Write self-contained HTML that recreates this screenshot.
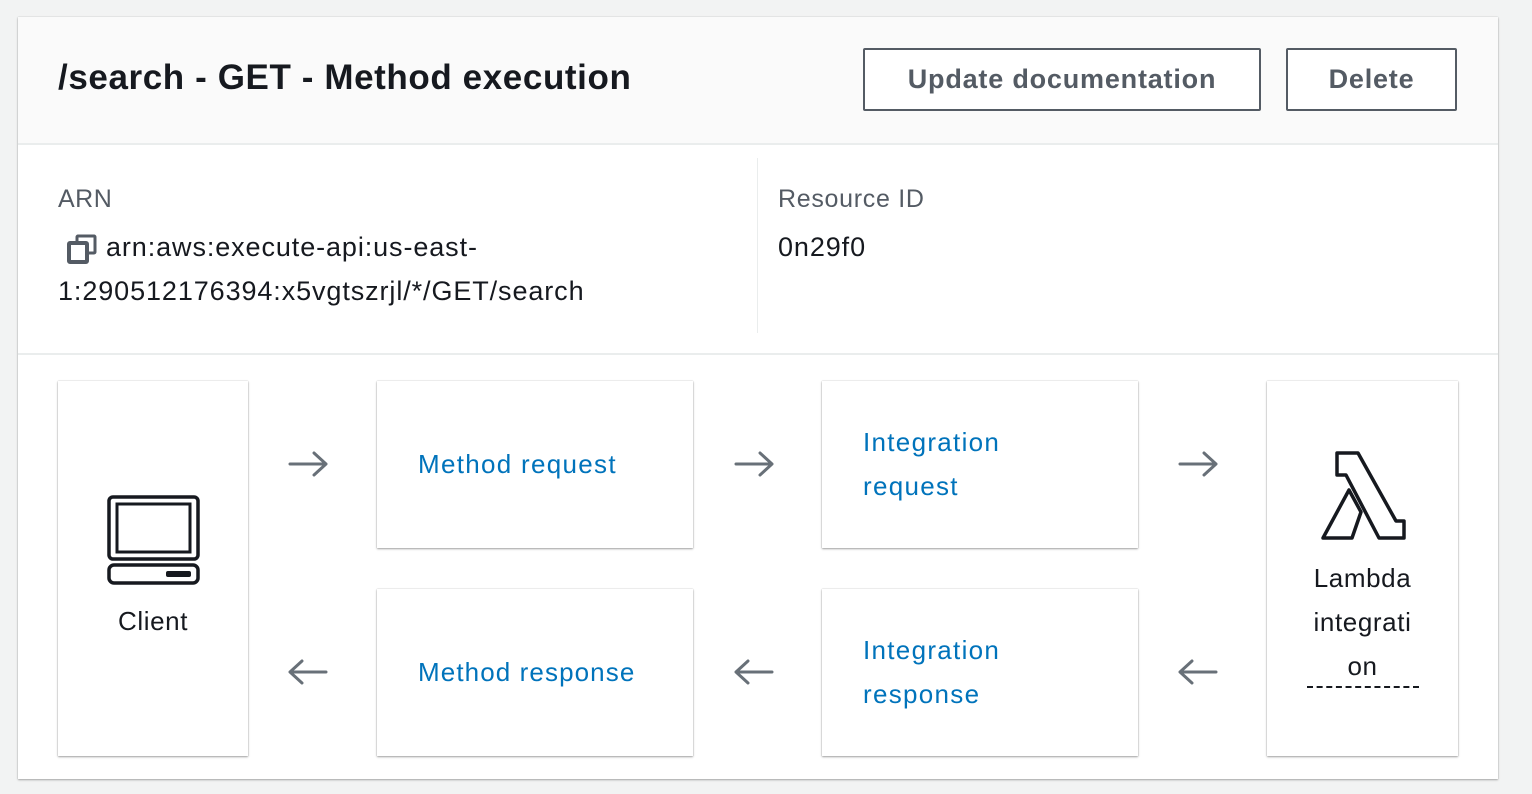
<!DOCTYPE html>
<html><head><style>
*{margin:0;padding:0;box-sizing:border-box}
body{width:1532px;height:794px;background:#f2f3f3;font-family:"Liberation Sans",sans-serif;position:relative;overflow:hidden;color:#16191f}
.a{position:absolute}
.card{left:18px;top:17px;width:1480px;height:762px;background:#fff;box-shadow:0 1px 2px rgba(0,0,0,.3),0 0 1px rgba(0,0,0,.2)}
.hdr{left:18px;top:17px;width:1480px;height:128px;background:#fafafa;border-bottom:2px solid #eaeded}
.btn{border:2px solid #545b64;border-radius:2px;background:#fff;color:#545b64;font-weight:bold;font-size:27px;letter-spacing:0.8px;display:flex;align-items:center;justify-content:center}
.box{background:#fff;box-shadow:0 1px 2px rgba(0,0,0,.35),0 0 1px rgba(0,0,0,.25)}
.lnk{color:#0073bb;font-size:26px;line-height:44px;letter-spacing:1.3px}
</style></head><body>
<div class="a card"></div>
<div class="a hdr"></div>
<div class="a" style="left:58px;top:58px;font-size:35px;font-weight:bold;letter-spacing:0.6px">/search - GET - Method execution</div>
<div class="a btn" style="left:863px;top:48px;width:398px;height:63px">Update documentation</div>
<div class="a btn" style="left:1286px;top:48px;width:171px;height:63px">Delete</div>
<div class="a" style="left:18px;top:353px;width:1480px;height:2px;background:#eaeded"></div>
<div class="a" style="left:757px;top:158px;width:1px;height:175px;background:#eaeded"></div>
<div class="a" style="left:58px;top:185px;font-size:25px;color:#545b64;letter-spacing:0.5px">ARN</div>
<svg class="a" style="left:67px;top:234px" width="32" height="30" viewBox="0 0 32 30"><rect x="10" y="2" width="18" height="17" rx="1" fill="none" stroke="#545b64" stroke-width="3"/><rect x="2" y="9" width="18" height="19" rx="1" fill="#fff" stroke="#545b64" stroke-width="4"/></svg>
<div class="a" style="left:106px;top:232px;font-size:27px;letter-spacing:0.9px">arn:aws:execute-api:us-east-</div>
<div class="a" style="left:58px;top:276px;font-size:27px;letter-spacing:0.9px">1:290512176394:x5vgtszrjl/*/GET/search</div>
<div class="a" style="left:778px;top:185px;font-size:25px;color:#545b64;letter-spacing:0.7px">Resource ID</div>
<div class="a" style="left:778px;top:232px;font-size:27px;letter-spacing:0.9px">0n29f0</div>

<div class="a box" style="left:58px;top:381px;width:190px;height:375px"></div>
<svg class="a" style="left:107px;top:495px" width="94" height="90" viewBox="0 0 94 90"><rect x="2" y="2" width="89" height="62" rx="4" fill="none" stroke="#16191f" stroke-width="3.5"/><rect x="10" y="9" width="73" height="48" fill="none" stroke="#16191f" stroke-width="3"/><rect x="2" y="70" width="89" height="18" rx="5" fill="none" stroke="#16191f" stroke-width="3.5"/><rect x="59" y="76" width="25" height="6" rx="2" fill="#16191f"/></svg>
<div class="a" style="left:58px;top:606px;width:190px;text-align:center;font-size:26px;letter-spacing:0.6px">Client</div>

<svg width="0" height="0" style="position:absolute"><defs><g id="r"><path d="M2 14 H38 M26 3 L38 14 L26 25" fill="none" stroke="#687078" stroke-width="3" stroke-linecap="round" stroke-linejoin="round"/></g><g id="l"><path d="M38 14 H2 M14 3 L2 14 L14 25" fill="none" stroke="#687078" stroke-width="3" stroke-linecap="round" stroke-linejoin="round"/></g></defs></svg>
<svg class="a" style="left:288px;top:450px" width="40" height="28"><use href="#r"/></svg>
<svg class="a" style="left:288px;top:658px" width="40" height="28"><use href="#l"/></svg>
<svg class="a" style="left:734px;top:450px" width="40" height="28"><use href="#r"/></svg>
<svg class="a" style="left:734px;top:658px" width="40" height="28"><use href="#l"/></svg>
<svg class="a" style="left:1178px;top:450px" width="40" height="28"><use href="#r"/></svg>
<svg class="a" style="left:1178px;top:658px" width="40" height="28"><use href="#l"/></svg>

<div class="a box" style="left:377px;top:381px;width:316px;height:167px"></div>
<div class="a lnk" style="left:418px;top:442px">Method request</div>
<div class="a box" style="left:377px;top:589px;width:316px;height:167px"></div>
<div class="a lnk" style="left:418px;top:650px;letter-spacing:1.1px">Method response</div>
<div class="a box" style="left:822px;top:381px;width:316px;height:167px"></div>
<div class="a lnk" style="left:863px;top:420px">Integration<br>request</div>
<div class="a box" style="left:822px;top:589px;width:316px;height:167px"></div>
<div class="a lnk" style="left:863px;top:628px">Integration<br>response</div>

<div class="a box" style="left:1267px;top:381px;width:191px;height:375px"></div>
<svg class="a" style="left:1320px;top:450px" width="90" height="92" viewBox="0 0 90 92"><path d="M17 3 H38 L76 71 H84 V88 H59 L26 25 H17 Z" fill="none" stroke="#16191f" stroke-width="3.5" stroke-linejoin="round"/><path d="M29 40 L41 62 L32 88 H3 Z" fill="none" stroke="#16191f" stroke-width="3.5" stroke-linejoin="round"/></svg>
<div class="a" style="left:1267px;top:556px;width:191px;text-align:center;font-size:26px;line-height:44px;letter-spacing:0.6px">Lambda<br>integrati<br>on</div>
<div class="a" style="left:1307px;top:686px;width:112px;border-top:2px dashed #16191f"></div>
</body></html>
